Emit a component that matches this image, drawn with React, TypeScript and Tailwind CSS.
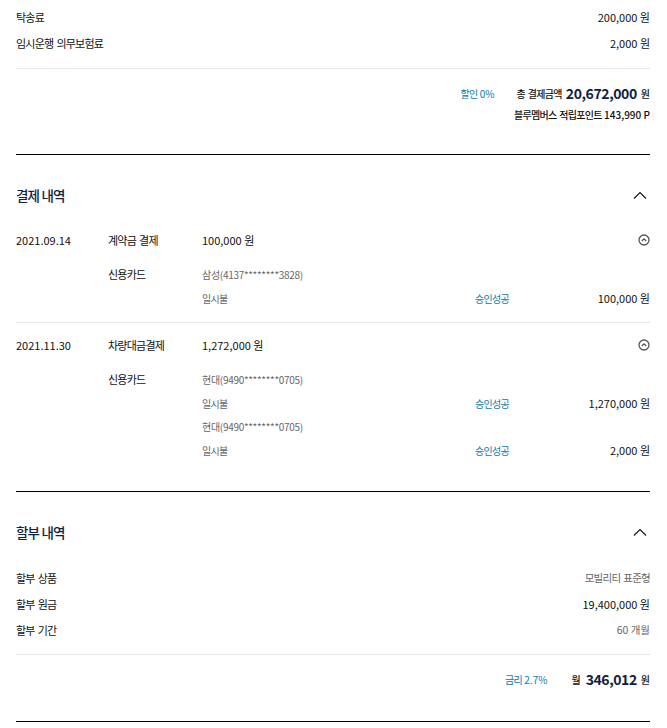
import React from 'react'

const navy = 'text-[#0f2240]'
const ko = 'tracking-[-0.07em] [word-spacing:0.12em]'

const ChevronUp = () => (
  <svg width="14" height="8" viewBox="0 0 14 8" fill="none" className="block">
    <path d="M1 7.5L7 1.5L13 7.5" stroke="#111" strokeWidth="1.1" />
  </svg>
)

const CircleUp = () => (
  <svg width="12" height="12" viewBox="0 0 12 12" fill="none" className="block">
    <circle cx="6" cy="6" r="5" stroke="#555" strokeWidth="1.3" />
    <path d="M3.8 7L6 4.9L8.2 7" stroke="#555" strokeWidth="1.2" />
  </svg>
)

const Row = ({ label, value, gray, koValue }: { label: string; value: string; gray?: boolean; koValue?: boolean }) => (
  <div className="flex h-[26px] items-center justify-between text-[11px] text-[#111]">
    <span className={ko}>{label}</span>
    <span className={`${gray ? 'text-[10.5px] text-[#666]' : ''} ${koValue ? ko : ''}`}>{value}</span>
  </div>
)

const Approval = ({ amount }: { amount: string }) => (
  <div className="flex h-[25px] items-center text-[10px]">
    <span className={`w-[273px] text-[#666] ${ko}`}>일시불</span>
    <span className={`text-[#0a7aa8] ${ko}`}>승인성공</span>
    <span className="ml-auto text-[11px] text-[#111]">{amount}</span>
  </div>
)

const Payment = ({
  date,
  title,
  amount,
  cards,
}: {
  date: string
  title: string
  amount: string
  cards: { name: string; amount: string }[]
}) => (
  <div>
    <div className="flex h-[22px] items-center text-[11px] text-[#111]">
      <span className="w-[92px]">{date}</span>
      <span className={`w-[94px] ${ko}`}>{title}</span>
      <span>{amount}</span>
      <span className="ml-auto">
        <CircleUp />
      </span>
    </div>
    <div className="mt-[11px] flex">
      <span className="w-[92px] shrink-0" />
      <span className={`flex h-[24px] w-[94px] shrink-0 items-center text-[11px] text-[#111] ${ko}`}>
        신용카드
      </span>
      <div className="-ml-[186px] flex-1 pl-[186px]">
        {cards.map((c, i) => (
          <div key={i} className={i > 0 ? '-mt-[2px]' : ''}>
            <div className="flex h-[24px] items-center text-[10px] text-[#666]">
              <span className="tracking-[-0.03em]">{c.name}</span>
            </div>
            <Approval amount={c.amount} />
          </div>
        ))}
      </div>
    </div>
  </div>
)

const SectionHead = ({ title }: { title: string }) => (
  <div className="flex h-[24px] items-center justify-between">
    <h2 className={`text-[13.5px] font-medium tracking-[-0.06em] ${navy}`}>{title}</h2>
    <span className="mr-[3px]">
      <ChevronUp />
    </span>
  </div>
)

export default function App() {
  return (
    <div
      className="min-h-[728px] bg-white pl-4 pr-[17px] text-[#111]"
      style={{ fontFamily: '"Noto Sans CJK KR", "Noto Sans", sans-serif' }}
    >
      {/* fee rows */}
      <div className="pt-[4px]">
        <Row label="탁송료" value="200,000 원" />
        <Row label="임시운행 의무보험료" value="2,000 원" />
      </div>
      <div className="mt-[12px] h-px bg-[#e8e8e8]" />

      {/* total */}
      <div className="pt-[13px] pb-[30px]">
        <div className="flex h-[22px] items-center justify-end">
          <span className="mr-[22px] text-[10px] text-[#0a7aa8]">
            <span className={ko}>할인</span> 0%
          </span>
          <span className={`text-[10px] font-medium text-[#111] ${ko}`}>총 결제금액</span>
          <span className={`ml-[4px] text-[14px] font-bold tracking-[-0.03em] ${navy}`}>20,672,000</span>
          <span className="ml-[4px] text-[10px] font-medium text-[#111]">원</span>
        </div>
        <div className="flex h-[20px] items-center justify-end text-[10px] font-medium text-[#111]">
          <span className={ko}>블루멤버스 적립포인트</span>&nbsp;143,990 P
        </div>
      </div>
      <div className="h-px bg-black" />

      {/* 결제 내역 */}
      <div className="pt-[28px]">
        <SectionHead title="결제 내역" />
        <div className="mt-[22px] pb-[11px]">
          <Payment
            date="2021.09.14"
            title="계약금 결제"
            amount="100,000 원"
            cards={[{ name: '삼성(4137********3828)', amount: '100,000 원' }]}
          />
        </div>
        <div className="h-px bg-[#e8e8e8]" />
        <div className="pt-[11px] pb-[28px]">
          <Payment
            date="2021.11.30"
            title="차량대금결제"
            amount="1,272,000 원"
            cards={[
              { name: '현대(9490********0705)', amount: '1,270,000 원' },
              { name: '현대(9490********0705)', amount: '2,000 원' },
            ]}
          />
        </div>
      </div>
      <div className="h-px bg-black" />

      {/* 할부 내역 */}
      <div className="pt-[28px]">
        <SectionHead title="할부 내역" />
        <div className="mt-[21px]">
          <Row label="할부 상품" value="모빌리티 표준형" gray koValue />
          <Row label="할부 원금" value="19,400,000 원" />
          <Row label="할부 기간" value="60 개월" gray />
        </div>
        <div className="mt-[11px] h-px bg-[#e8e8e8]" />
        <div className="flex h-[48px] items-center justify-end">
          <span className="mr-[24px] text-[10px] text-[#0a7aa8]">
            <span className={ko}>금리</span> 2.7%
          </span>
          <span className="text-[10px] font-medium text-[#111]">월</span>
          <span className={`ml-[5px] text-[14px] font-bold tracking-[-0.03em] ${navy}`}>346,012</span>
          <span className="ml-[4px] text-[10px] font-medium text-[#111]">원</span>
        </div>
        <div className="mt-[18px] h-px bg-black" />
      </div>
    </div>
  )
}
